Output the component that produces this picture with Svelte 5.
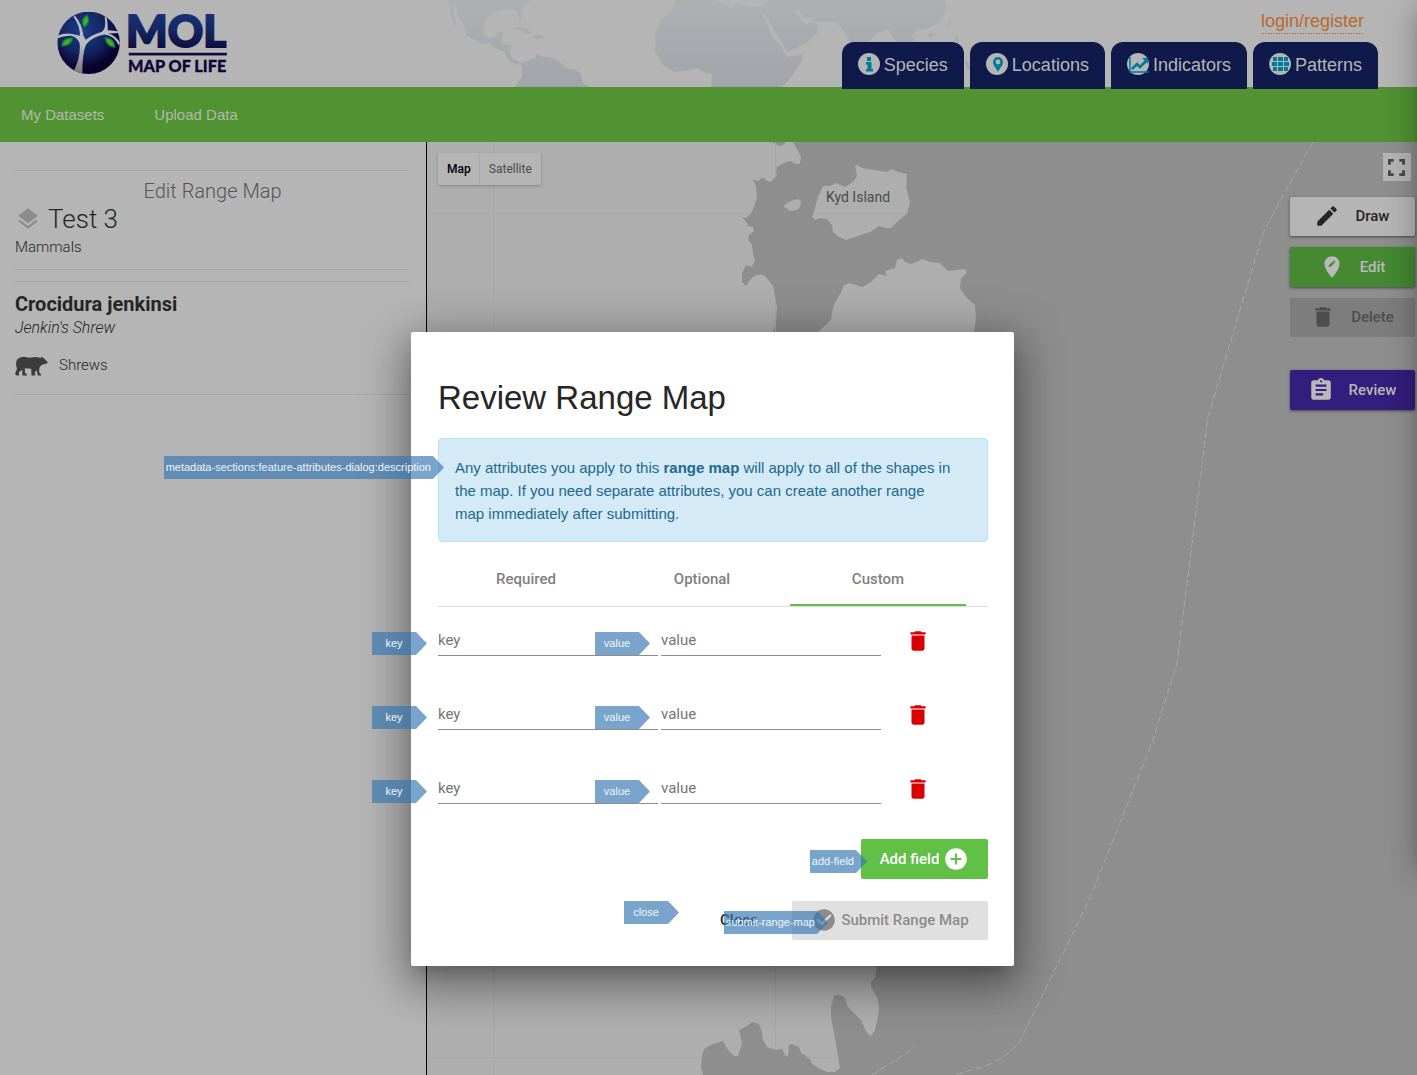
<script>
  const tabs = [
    { label: 'Species', icon: 'info' },
    { label: 'Locations', icon: 'pin' },
    { label: 'Indicators', icon: 'chart' },
    { label: 'Patterns', icon: 'grid' }
  ];
  const sections = ['Required', 'Optional', 'Custom'];
  let active = $state('Custom');
  let rows = $state([
    { id: 1, key: '', value: '' },
    { id: 2, key: '', value: '' },
    { id: 3, key: '', value: '' }
  ]);
  let nextId = 4;

  function addField() {
    rows.push({ id: nextId++, key: '', value: '' });
  }
  function removeField(id) {
    rows = rows.filter((r) => r.id !== id);
  }
</script>

{#snippet trash()}
  <svg class="icon" viewBox="0 0 24 24" aria-hidden="true"><path d="M6 19c0 1.100.9 2 2 2h8c1.100 0 2-.9 2-2V7H6v12zM19 4h-3.500l-1-1h-5l-1 1H5v2h14V4z" /></svg>
{/snippet}

<div class="page">
  <header class="top">
    <svg class="world" viewBox="0 0 560 87" aria-hidden="true">
      <defs>
        <linearGradient id="fade" x1="0" y1="0" x2="0" y2="87" gradientUnits="userSpaceOnUse">
          <stop offset="0" stop-color="#aeb0b2" />
          <stop offset="1" stop-color="#a1a4aa" />
        </linearGradient>
      </defs>
      <g fill="url(#fade)">
        <path d="M29 0L30 12L33 22L37 27L33 7L35 6L39 17L46 30L46 35L60 43L70 44L77 49L84 52L89 60L96 65L100 63L102 68L102 77L95 87H171L163 83L160 73L156 70L147 68L135 58L123 57L117 53L115 58L107 61L103 63L92 59L90 53L91 45L81 44L84 32L78 32L75 37L68 38L63 32L65 20L72 13L80 10L97 10L99 20L102 19L101 10L110 0Z" />
        <path d="M91 29L97 27L105 28L112 33L107 34L100 30ZM112 37L117 34L124 36L123 38L117 40Z" />
        <path d="M255 0L252 10L241 20L235 32L236 40L234 50L238 57L243 65L254 72L265 71L277 68L283 72L292 74L291 87H362L373 75L382 60V54L367 57L362 48L353 37L343 15L345 14L353 28L367 52L387 43L397 33L399 27L393 22L385 24L373 10L377 9L385 18L392 17L395 22H417L423 30L428 37L433 50H440L449 42L456 34L468 29L473 37L478 45L484 56L488 44L495 44L492 35L498 30L508 28L520 22L527 10L525 0H347L345 5L333 7L315 3L312 8L295 0Z" />
        <path d="M507 35L511 32L514 34L511 38ZM528 22L531 22L530 28L528 27ZM535 35L538 36L539 42L535 41ZM545 60L549 62L550 70L546 68Z" />
      </g>
    </svg>
    <a class="logo" href="#home" aria-label="Map of Life">
      <svg viewBox="171 36 516 187" aria-hidden="true">
        <defs>
          <radialGradient id="globe" cx=".4" cy=".3" r=".75">
            <stop offset="0" stop-color="#1c3d88" />
            <stop offset=".5" stop-color="#122460" />
            <stop offset=".8" stop-color="#0b022c" />
          </radialGradient>
          <linearGradient id="word" x1="0" y1="0" x2="0" y2="1">
            <stop offset="0" stop-color="#1a3880" />
            <stop offset=".5" stop-color="#132763" />
            <stop offset="1" stop-color="#0c0230" />
          </linearGradient>
          <linearGradient id="trunk" x1="0" y1="0" x2="0" y2="1">
            <stop offset=".5" stop-color="#b8bcc4" />
            <stop offset="1" stop-color="#77777c" />
          </linearGradient>
          <clipPath id="disc"><circle cx="265" cy="129" r="94" /></clipPath>
        </defs>
        <circle cx="265" cy="129" r="94" fill="url(#globe)" />
        <g clip-path="url(#disc)">
          <path fill="url(#trunk)" d="M214 224Q242 178 238 132Q232 112 212 108Q190 107 170 116V108Q194 98 216 102L239 108Q239 76 219 50L224 47Q245 72 249 106L256 120Q276 104 304 96Q320 86 313 49L319 51Q324 74 322 91L360 94V99L324 101Q347 107 360 130L356 137Q342 108 314 104Q278 110 258 133Q246 156 246 224Z" />
        </g>
        <g fill="#1c9a3c" stroke="#0d7434" stroke-width="2">
          <path d="M260 44Q275 64 252 83Q235 62 260 44Z" />
          <path d="M217 114Q215 140 184 139Q183 114 217 114Z" />
          <path d="M314 113Q344 114 345 143Q318 142 314 113Z" />
        </g>
        <g fill="#52ad25">
          <path d="M260 50Q266 64 253 76Q246 62 260 50Z" />
          <path d="M211 118Q208 132 190 134Q192 119 211 118Z" />
          <path d="M319 118Q336 120 340 137Q325 135 319 118Z" />
        </g>
        <text x="378" y="141" class="mol" fill="url(#word)" stroke="url(#word)">MOL</text>
        <rect x="386" y="159" width="296" height="8" fill="#0d0b3c" />
        <text x="384" y="217" class="motto" fill="#0d0536" stroke="#0d0536">MAP OF LIFE</text>
      </svg>
    </a>
    <div class="account">
      <a class="login" href="#login">login/register</a>
      <nav class="tabs" aria-label="Explore">
        {#each tabs as tab}
          <a href={'#' + tab.label.toLowerCase()}>
            <svg viewBox="0 0 22 22" aria-hidden="true">
              <circle cx="11" cy="11" r="11" fill="#b5b5b5" />
              {#if tab.icon === 'info'}
                <path fill="#00799b" d="M9 4h4v4H9zM8 9h5.500v7H15v2.500H8V16h1.500v-4.500H8z" />
              {:else if tab.icon === 'pin'}
                <path fill="#00799b" fill-rule="evenodd" d="M12 4a5 5 0 0 0-5 5c0 3 3 6 5 10c2-4 5-7 5-10a5 5 0 0 0-5-5zm0 2.600a2.400 2.400 0 1 1 0 4.800a2.400 2.400 0 0 1 0-4.800z" />
              {:else if tab.icon === 'chart'}
                <path fill="none" stroke="#00799b" stroke-width="1.500" d="M3 4v15h19" />
                <path fill="none" stroke="#00799b" stroke-width="2.500" d="M5 16l5-5l3 3l6-6" />
                <path fill="#00799b" d="M15 5h6v6z" />
              {:else}
                <path fill="#00799b" d="M4 4h4v4H4zM9 4h5v4H9zM15 4h4v4h-4zM3 9h5v4H3zM9 9h5v4H9zM15 9h5v4h-5zM4 14h4v4H4zM9 14h5v4H9zM15 14h4v4h-4z" />
              {/if}
            </svg>
            {tab.label}
          </a>
        {/each}
      </nav>
    </div>
  </header>

  <nav class="bar" aria-label="Datasets">
    <a href="#datasets">My Datasets</a>
    <a href="#upload">Upload Data</a>
  </nav>

  <main>
    <aside>
      <section class="dataset">
        <h2>Edit Range Map</h2>
        <div class="name">
          <svg class="icon" viewBox="0 0 24 24" aria-hidden="true"><path d="M11.990 18.540l-7.370-5.730L3 14.070l9 7 9-7-1.630-1.270-7.380 5.740zM12 16l7.360-5.730L21 9l-9-7-9 7 1.630 1.270L12 16z" /></svg>
          <span>Test 3</span>
        </div>
        <p>Mammals</p>
      </section>
      <section class="species">
        <h3>Crocidura jenkinsi</h3>
        <p><em>Jenkin's Shrew</em></p>
        <p class="group">
          <svg viewBox="48 635 100 58" aria-hidden="true"><path d="M52 650Q55 638 75 636L91 639L112 637L127 640L129 635L134 640L140 645L147 652L146 656L128 661L122 669L121 683L127 690V693H117L113 676L108 684L110 693H98L97 672L78 671L78 683L84 690V693H70L70 675L60 682L60 693H53L48 688L54 672Q49 662 52 650Z" /></svg>
          Shrews
        </p>
      </section>
    </aside>

    <div class="map">
      <svg class="terrain" viewBox="427 142 990 933" preserveAspectRatio="xMinYMin slice" aria-hidden="true">
        <path fill="#8e8e8e" d="M772 142L779 146L783 145L786 142H793L796 147L801 157L800 164L796 164L790 161L784 163L777 167L776 172L777 175L771 182L767 181L764 178L761 178L759 181L753 180L756 187L757 197L754 207L751 214L746 218L742 217L747 223L748 226L753 227L754 231L749 235L748 239L752 245L753 253L755 260L752 267L746 265L742 273L742 282L746 286L751 279Q759 271 766 277L773 286L775 297L777 307L776 322L773 332V600L877 966L875 978L871 982V987L877 997L879 1007L878 1017L875 1030L871 1036L867 1033L863 1025L861 1020L854 1013L848 1007L845 998Q840 993 834 996L831 1007V1017L834 1033L837 1050L840 1068L835 1072H827L818 1068L811 1063V1060L805 1055L801 1053L799 1047L792 1044L789 1045L788 1057L785 1055L782 1049L775 1050L767 1047L763 1040L762 1032L759 1024L752 1022L747 1026L739 1030L742 1043L738 1056H734L728 1050L723 1041L713 1044L705 1048L702 1055L701 1067L703 1075H1417V142Z" />
        <g fill="#aeaeae">
          <path d="M855 166L858 165L862 168L875 170L887 172L892 169L898 172L907 174L906 187L910 202L907 214L900 219L891 228L886 228L879 226L870 232L846 240L839 237L833 232L832 225L827 219L820 218L815 220L812 217L815 208L818 197L823 186H830L836 183L845 187L854 181L857 176Z" />
          <path d="M783 206L791 201L798 199L801 201L800 207L797 210L790 211Z" />
          <path d="M818 332L831 320L833 307L841 292L844 285L850 283L862 287L871 282L879 274L887 276L885 271L895 268L897 260L902 258L905 262L911 264L923 259L930 262L940 263L948 271L965 269L967 273L961 278L960 288L966 297L975 305L976 320L974 332Z" />
        </g>
        <path fill="none" stroke="#a7a7a7" d="M493.500 142V1075M775.500 142V176M775.500 300V340M775.500 960V1050M427 213.500H751M813 213.500H907M427 1057.500H701M806 1057.500H836" />
        <path fill="none" stroke="#a8a8a8" stroke-dasharray="7 3" d="M1313 142L1285 192L1263 233L1208 417L1177 663L1153 740L1090 898L1020 1041Q1010 1055 988 1065L955 1075M872 1075L908 1052L914 1046" />
        <text x="858" y="202" class="place">Kyd Island</text>
      </svg>
      <div class="types">
        <button type="button" class="on">Map</button>
        <button type="button">Satellite</button>
      </div>
      <div class="tools">
        <button type="button" class="full" aria-label="Toggle fullscreen">
          <svg viewBox="0 0 18 18" aria-hidden="true"><path d="M0 0h6v3H3v3H0zM12 0h6v6h-3V3h-3zM0 12h3v3h3v3H0zM15 12h3v6h-6v-3h3z" /></svg>
        </button>
        <button type="button" class="tool draw">
          <svg class="icon" viewBox="0 0 24 24" aria-hidden="true"><path d="M3 17.250V21h3.750L17.810 9.940l-3.750-3.750L3 17.250zM20.710 7.040a1 1 0 0 0 0-1.410l-2.340-2.340a1 1 0 0 0-1.410 0l-1.830 1.830 3.750 3.750 1.830-1.830z" /></svg>
          Draw
        </button>
        <button type="button" class="tool edit">
          <svg class="icon" viewBox="0 0 24 24" aria-hidden="true"><path fill-rule="evenodd" d="M12 2C8.140 2 5 5.140 5 9c0 5.250 7 13 7 13s7-7.750 7-13c0-3.860-3.140-7-7-7zm-1.440 10H9v-1.560l3.350-3.340 1.560 1.560L10.560 12zm4.450-4.450l-.7.700-1.560-1.560.7-.7a.5.5 0 0 1 .7 0l.86.860a.5.5 0 0 1 0 .7z" /></svg>
          Edit
        </button>
        <button type="button" class="tool delete" disabled>{@render trash()} Delete</button>
        <button type="button" class="tool review">
          <svg class="icon" viewBox="0 0 24 24" aria-hidden="true"><path fill-rule="evenodd" d="M19 3h-4.180C14.400 1.840 13.300 1 12 1s-2.400.84-2.820 2H5c-1.100 0-2 .9-2 2v14c0 1.100.9 2 2 2h14c1.100 0 2-.9 2-2V5c0-1.100-.9-2-2-2zm-7 0c.55 0 1 .45 1 1s-.45 1-1 1-1-.45-1-1 .45-1 1-1zm2 14H7v-2h7v2zm3-4H7v-2h10v2zm0-4H7V7h10v2z" /></svg>
          Review
        </button>
      </div>
    </div>
  </main>

  <div class="drawer-clip"><div class="drawer"></div></div>

  <div class="overlay">
    <div class="dialog" role="dialog" aria-labelledby="title">
      <h1 id="title">Review Range Map</h1>
      <div class="alert">
        <span class="hint over">metadata-sections:feature-attributes-dialog:description</span>
        Any attributes you apply to this <strong>range map</strong> will apply to all of the shapes in the map. If you need
        separate attributes, you can create another range map immediately after submitting.
      </div>
      <div class="sections" role="tablist">
        {#each sections as s}
          <button type="button" role="tab" aria-selected={active === s} class:active={active === s} onclick={() => (active = s)}>{s}</button>
        {/each}
      </div>
      <div class="fields">
        {#each rows as row (row.id)}
          <div class="row">
            <label><span class="hint">key</span><input placeholder="key" bind:value={row.key} /></label>
            <label><span class="hint">value</span><input placeholder="value" bind:value={row.value} /></label>
            <button type="button" class="remove" aria-label="Remove field" onclick={() => removeField(row.id)}>{@render trash()}</button>
          </div>
        {/each}
      </div>
      <div class="actions">
        <div class="host">
          <button type="button" class="add" onclick={addField}>
            Add field
            <svg class="icon" viewBox="0 0 24 24" aria-hidden="true"><path d="M12 2C6.480 2 2 6.480 2 12s4.480 10 10 10 10-4.480 10-10S17.520 2 12 2zm5 11h-4v4h-2v-4H7v-2h4V7h2v4h4v2z" /></svg>
          </button>
          <span class="hint over">add-field</span>
        </div>
      </div>
      <div class="actions last">
        <div class="host">
          <button type="button" class="close">Close</button>
          <span class="hint away">close</span>
        </div>
        <div class="host">
          <button type="button" class="submit" disabled>
            <svg class="icon" viewBox="0 0 24 24" aria-hidden="true"><path d="M12 2C6.480 2 2 6.480 2 12s4.480 10 10 10 10-4.480 10-10S17.520 2 12 2zm-2 15l-5-5 1.410-1.410L10 14.170l7.590-7.590L19 8l-9 9z" /></svg>
            Submit Range Map
          </button>
          <span class="hint deep">submit-range-map</span>
        </div>
      </div>
    </div>
  </div>
</div>

<style>
  :global(body) { margin: 0; background: #b5b5b5; }
  .page, .page * { box-sizing: border-box; }
  .page {
    position: relative;
    display: flex;
    flex-direction: column;
    min-height: 100vh;
    font-family: Roboto, "Liberation Sans", sans-serif;
    font-size: 15px;
    color: #262626;
    background: #b5b5b5;
  }
  button { border: 0; padding: 0; font: inherit; color: inherit; background: none; cursor: pointer; }
  a { text-decoration: none; }
  h1, h2, h3, p { margin: 0; font-weight: 300; }
  .icon { width: 26px; height: 26px; fill: currentColor; flex: none; }

  .top {
    position: relative;
    display: flex;
    justify-content: space-between;
    height: 87px;
    padding: 0 39px 0 57px;
    font-family: "Liberation Sans", sans-serif;
    font-size: 18px;
  }
  .world { position: absolute; left: 420px; top: 0; width: 560px; height: 87px; }
  .logo { padding-top: 12px; }
  .logo svg { display: block; width: 172px; height: 62px; }
  .mol { font: 900 132px Lato, sans-serif; stroke-width: 6px; }
  .motto { font: 900 49px Lato, sans-serif; stroke-width: 1px; }
  .account { position: relative; z-index: 1; display: flex; flex-direction: column; align-items: flex-end; }
  .login { margin: 9px 14px 8px 0; line-height: 24px; color: #b9692c; border-bottom: 1px dotted #b9692c; }
  .tabs { display: flex; gap: 6px; }
  .tabs a {
    display: flex;
    align-items: center;
    gap: 4px;
    height: 47px;
    padding: 0 16px 1px;
    color: #b5b5b5;
    background: #101a4a;
    border-radius: 12px 12px 0 0;
  }
  .tabs svg { width: 22px; height: 22px; margin-bottom: 2px; }

  .bar {
    display: flex;
    align-items: center;
    gap: 50px;
    height: 55px;
    padding: 0 21px;
    background: #519233;
    font-family: "Liberation Sans", sans-serif;
  }
  .bar a { color: #b2b9ac; }

  main { display: grid; grid-template-columns: 3fr 7fr; flex: 1; }
  aside { padding: 28px 15px 0; }
  aside section { border: solid #a6a6a6; border-width: 1px 0; }
  .dataset { height: 100px; margin-bottom: 11px; padding-top: 8px; }
  .dataset h2 { font-size: 20px; line-height: 24px; text-align: center; color: #555; }
  .name { display: flex; align-items: center; gap: 7px; font-size: 26px; font-weight: 300; line-height: 32px; }
  .name .icon { color: #8c8c8c; }
  aside p { line-height: 24px; }
  em { font-size: 16px; }
  .species { height: 114px; padding-top: 10px; }
  .species h3 { font-size: 20px; font-weight: 700; line-height: 24px; }
  .species .group { display: flex; align-items: center; gap: 11px; margin-top: 13px; }
  .group svg { width: 33px; height: 20px; margin-top: 2px; fill: #3c3c3c; }

  .map {
    position: relative;
    display: flex;
    justify-content: space-between;
    align-items: flex-start;
    margin-left: 1px;
    padding: 11px 2px 0 11px;
    border-left: 1px solid #000;
    background: #aeaeae;
  }
  .terrain { position: absolute; inset: 0; width: 100%; height: 100%; }
  .place { font: 400 14px Roboto, sans-serif; text-anchor: middle; fill: #4b4b4b; }
  .types { position: relative; display: flex; border-radius: 2px; box-shadow: 0 1px 3px rgba(0, 0, 0, .25); background: #b5b5b5; font-size: 12px; }
  .types button { height: 32px; padding: 0 9px; color: #4a4a4a; }
  .types .on { padding-right: 8px; color: #000; font-weight: 500; border-right: 1px solid #a9a9a9; }
  .tools { position: relative; display: flex; flex-direction: column; align-items: flex-end; gap: 11px; }
  .full { display: grid; place-items: center; width: 28px; height: 28px; margin: 0 4px 5px 0; background: #b5b5b5; }
  .full svg { width: 17px; height: 17px; fill: #484848; }
  .tool {
    display: flex;
    align-items: center;
    justify-content: center;
    gap: 15px;
    width: 125px;
    height: 39px;
    padding: 0 1px 1px 0;
    border-radius: 2px;
    font-weight: 500;
    color: #b9b9b9;
    box-shadow: 0 1px 3px rgba(0, 0, 0, .5);
  }
  .draw { background: #b5b5b5; color: #262626; }
  .edit { height: 40px; background: #458932; }
  .delete { background: #7d7d7d; color: #4e4e4e; box-shadow: none; }
  .review { height: 40px; margin-top: 22px; background: #321e7c; }

  .drawer-clip { position: absolute; inset: 0; overflow: hidden; pointer-events: none; }
  .drawer { position: absolute; left: 100%; top: 0; width: 300px; height: 80vh; box-shadow: 0 16px 24px 2px rgba(0, 0, 0, .14), 0 6px 30px 5px rgba(0, 0, 0, .12), 0 8px 10px -5px rgba(0, 0, 0, .2); }

  .overlay { position: absolute; inset: 0; z-index: 2; display: flex; justify-content: center; align-items: flex-start; padding: 332px 0 0 8px; }
  .dialog {
    width: 603px;
    padding: 41px 26px 26px 27px;
    border-radius: 2px;
    background: #fff;
    box-shadow: 0 11px 15px -7px rgba(0, 0, 0, .2), 0 24px 38px 3px rgba(0, 0, 0, .14), 0 9px 46px 8px rgba(0, 0, 0, .3);
  }
  h1 { font: 400 33px/50px "Liberation Sans", sans-serif; margin-bottom: 15px; }
  .alert {
    position: relative;
    padding: 17px 34px 16px 16px;
    border: 1px solid #b3e9f2;
    border-radius: 4px;
    background: #d4ebf7;
    color: #20698c;
    font: 15px/23px "Liberation Sans", sans-serif;
  }
  .sections { display: flex; height: 65px; border-bottom: 1px solid #dcdcdc; }
  .sections button { width: 176px; padding-top: 12px; border-bottom: 2px solid transparent; font-weight: 500; color: #808080; }
  .sections .active { border-color: #61c046; }
  .fields { display: grid; gap: 42px; padding: 17px 0 35px; }
  .row { display: flex; align-items: center; gap: 3px; }
  .row label { position: relative; width: 220px; }
  input {
    display: block;
    width: 100%;
    height: 32px;
    padding: 0;
    border: 0;
    border-bottom: 1px solid #8c8c8c;
    border-radius: 0;
    outline: 0;
    background: none;
    font: 15px Roboto, sans-serif;
    color: #262626;
  }
  input::placeholder { color: #757575; opacity: 1; }
  .remove { display: flex; margin-left: 21px; padding-top: 2px; color: #d80000; }
  .actions { display: flex; justify-content: flex-end; gap: 9px; }
  .last { margin-top: 22px; }
  .host { position: relative; }
  .actions button { display: flex; align-items: center; justify-content: center; height: 39px; padding-bottom: 1px; border-radius: 2px; font-weight: 500; }
  .actions .add { height: 40px; gap: 4px; width: 127px; background: #61c046; color: #fff; }
  .actions .close { width: 88px; }
  .actions .submit { gap: 4px; width: 196px; background: #e0e0e0; color: #8c8c8c; }

  .hint {
    position: absolute;
    top: 8px;
    right: calc(100% + 11px);
    z-index: 1;
    min-width: 55px;
    padding: 0 13px 0 2px;
    background: rgba(51, 117, 177, .66);
    clip-path: polygon(0 0, calc(100% - 11px) 0, 100% 50%, calc(100% - 11px) 100%, 0 100%);
    color: #f0f5fa;
    font: 11px/23px "Liberation Sans", sans-serif;
    text-align: center;
    white-space: nowrap;
    pointer-events: none;
  }
  .alert .over { top: 17px; right: calc(100% - 5px); }
  .host .over { top: 11px; right: calc(100% - 6px); }
  .hint.away { top: 0; right: calc(100% + 16px); }
  .hint.deep { top: 10px; right: calc(100% - 36px); }
</style>
